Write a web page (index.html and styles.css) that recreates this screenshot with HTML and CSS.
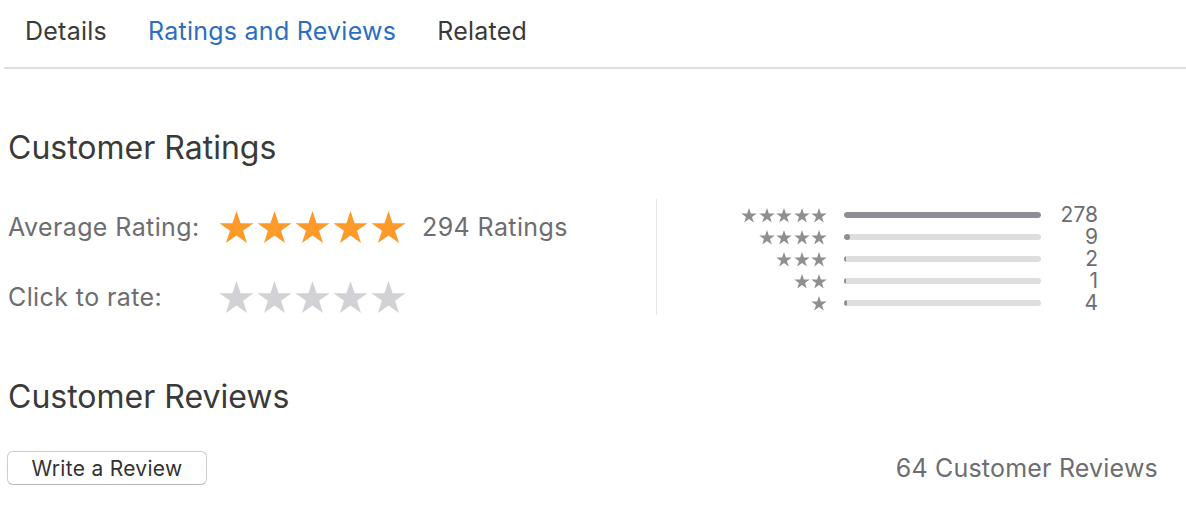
FILE: index.html
```html
<!DOCTYPE html>
<html lang="en">
<head>
    <meta charset="UTF-8">
    <meta name="viewport" content="width=device-width, initial-scale=1.0">
    <title>Ratings and Reviews</title>
    <link rel="stylesheet" href="styles.css">
</head>
<body>
    <svg width="0" height="0" class="defs">
        <defs>
            <symbol id="star" viewBox="0 0 100 95">
                <polygon points="50,0 61.8,35.1 98.9,35.1 68.9,56.8 80.3,91.9 50,70.2 19.7,91.9 31.1,56.8 1.1,35.1 38.2,35.1"/>
            </symbol>
        </defs>
    </svg>

    <!-- Tabs -->
    <nav class="tabs">
        <a class="tab">Details</a>
        <a class="tab active">Ratings and Reviews</a>
        <a class="tab">Related</a>
    </nav>

    <div class="content">
        <h2 class="section-title">Customer Ratings</h2>

        <div class="ratings">
            <div class="ratings-left">
                <div class="rating-row">
                    <span class="rating-label">Average Rating:</span>
                    <span class="stars big filled">
                        <svg><use href="#star"/></svg><svg><use href="#star"/></svg><svg><use href="#star"/></svg><svg><use href="#star"/></svg><svg><use href="#star"/></svg>
                    </span>
                    <span class="rating-count">294 Ratings</span>
                </div>
                <div class="rating-row">
                    <span class="rating-label">Click to rate:</span>
                    <span class="stars big empty">
                        <svg><use href="#star"/></svg><svg><use href="#star"/></svg><svg><use href="#star"/></svg><svg><use href="#star"/></svg><svg><use href="#star"/></svg>
                    </span>
                </div>
            </div>

            <div class="histogram">
                <div class="hist-row">
                    <span class="stars small"><svg><use href="#star"/></svg><svg><use href="#star"/></svg><svg><use href="#star"/></svg><svg><use href="#star"/></svg><svg><use href="#star"/></svg></span>
                    <span class="bar"><span class="bar-fill" style="width: 100%"></span></span>
                    <span class="hist-count">278</span>
                </div>
                <div class="hist-row">
                    <span class="stars small"><svg><use href="#star"/></svg><svg><use href="#star"/></svg><svg><use href="#star"/></svg><svg><use href="#star"/></svg></span>
                    <span class="bar"><span class="bar-fill" style="width: 6px"></span></span>
                    <span class="hist-count">9</span>
                </div>
                <div class="hist-row">
                    <span class="stars small"><svg><use href="#star"/></svg><svg><use href="#star"/></svg><svg><use href="#star"/></svg></span>
                    <span class="bar"><span class="bar-fill" style="width: 2px"></span></span>
                    <span class="hist-count">2</span>
                </div>
                <div class="hist-row">
                    <span class="stars small"><svg><use href="#star"/></svg><svg><use href="#star"/></svg></span>
                    <span class="bar"><span class="bar-fill" style="width: 2px"></span></span>
                    <span class="hist-count">1</span>
                </div>
                <div class="hist-row">
                    <span class="stars small"><svg><use href="#star"/></svg></span>
                    <span class="bar"><span class="bar-fill" style="width: 3px"></span></span>
                    <span class="hist-count">4</span>
                </div>
            </div>
        </div>

        <h2 class="section-title reviews-title">Customer Reviews</h2>

        <div class="reviews-bar">
            <button class="btn">Write a Review</button>
            <span class="reviews-count">64 Customer Reviews</span>
        </div>
    </div>
</body>
</html>
```

FILE: styles.css
```css
* {
    margin: 0;
    padding: 0;
    box-sizing: border-box;
}

body {
    font-family: Inter, "Noto Sans", sans-serif;
    background: #fff;
    color: #333;
}

.defs {
    position: absolute;
}

/* Tabs */
.tabs {
    display: flex;
    gap: 41px;
    margin-left: 4px;
    padding: 16px 0 0 21px;
    height: 69px;
    border-bottom: 2px solid #dedede;
}

.tab {
    font-size: 25px;
    letter-spacing: 0.25px;
    line-height: 31px;
    color: #3a3a3a;
}

.tab.active {
    color: #2b6fbe;
}

.content {
    padding: 0 28px 0 8px;
}

.section-title {
    font-size: 32px;
    font-weight: normal;
    line-height: 40px;
    color: #3a3a3a;
    margin-top: 59px;
}

/* Ratings */
.ratings {
    display: flex;
    margin-top: 31px;
}

.ratings-left {
    width: 649px;
    padding-top: 8px;
    border-right: 1px solid #e4e4e4;
    height: 116px;
}

.rating-row {
    display: flex;
    align-items: center;
    height: 40px;
    margin-bottom: 30px;
}

.rating-label {
    width: 211px;
    font-size: 25px;
    letter-spacing: 0.4px;
    color: #6d6d72;
}

.rating-count {
    margin-left: 16px;
    font-size: 25px;
    letter-spacing: 0.4px;
    color: #6d6d72;
}

.stars {
    display: flex;
}

.stars.big {
    gap: 3px;
}

.stars.big svg {
    width: 35px;
    height: 33px;
}

.stars.filled svg {
    fill: #fd9a29;
}

.stars.empty svg {
    fill: #d2d2d6;
}

.histogram {
    padding: 5px 0 0 80px;
}

.hist-row {
    display: flex;
    align-items: center;
    height: 22px;
}

.stars.small {
    width: 90px;
    justify-content: flex-end;
    gap: 1.5px;
}

.stars.small svg {
    width: 16px;
    height: 15px;
    fill: #8e8e93;
}

.bar {
    width: 197px;
    height: 6px;
    margin-left: 17px;
    border-radius: 3px;
    background: #dedee0;
    overflow: hidden;
}

.bar-fill {
    display: block;
    height: 100%;
    border-radius: 3px;
    background: #8e8e93;
}

.hist-count {
    width: 57px;
    text-align: right;
    font-size: 21px;
    line-height: 22px;
    color: #6d6d72;
}

/* Reviews */
.reviews-title {
    margin-top: 62px;
}

.reviews-bar {
    display: flex;
    justify-content: space-between;
    align-items: center;
    margin-top: 34px;
}

.btn {
    width: 200px;
    height: 34px;
    margin-left: -1px;
    font-family: Inter, "Noto Sans", sans-serif;
    font-size: 21px;
    letter-spacing: 0.3px;
    color: #333;
    background: #fff;
    border: 1px solid #cdcdcd;
    border-bottom-color: #b8b8b8;
    border-radius: 6px;
}

.reviews-count {
    font-size: 25px;
    letter-spacing: 0.2px;
    color: #6d6d72;
}
```
